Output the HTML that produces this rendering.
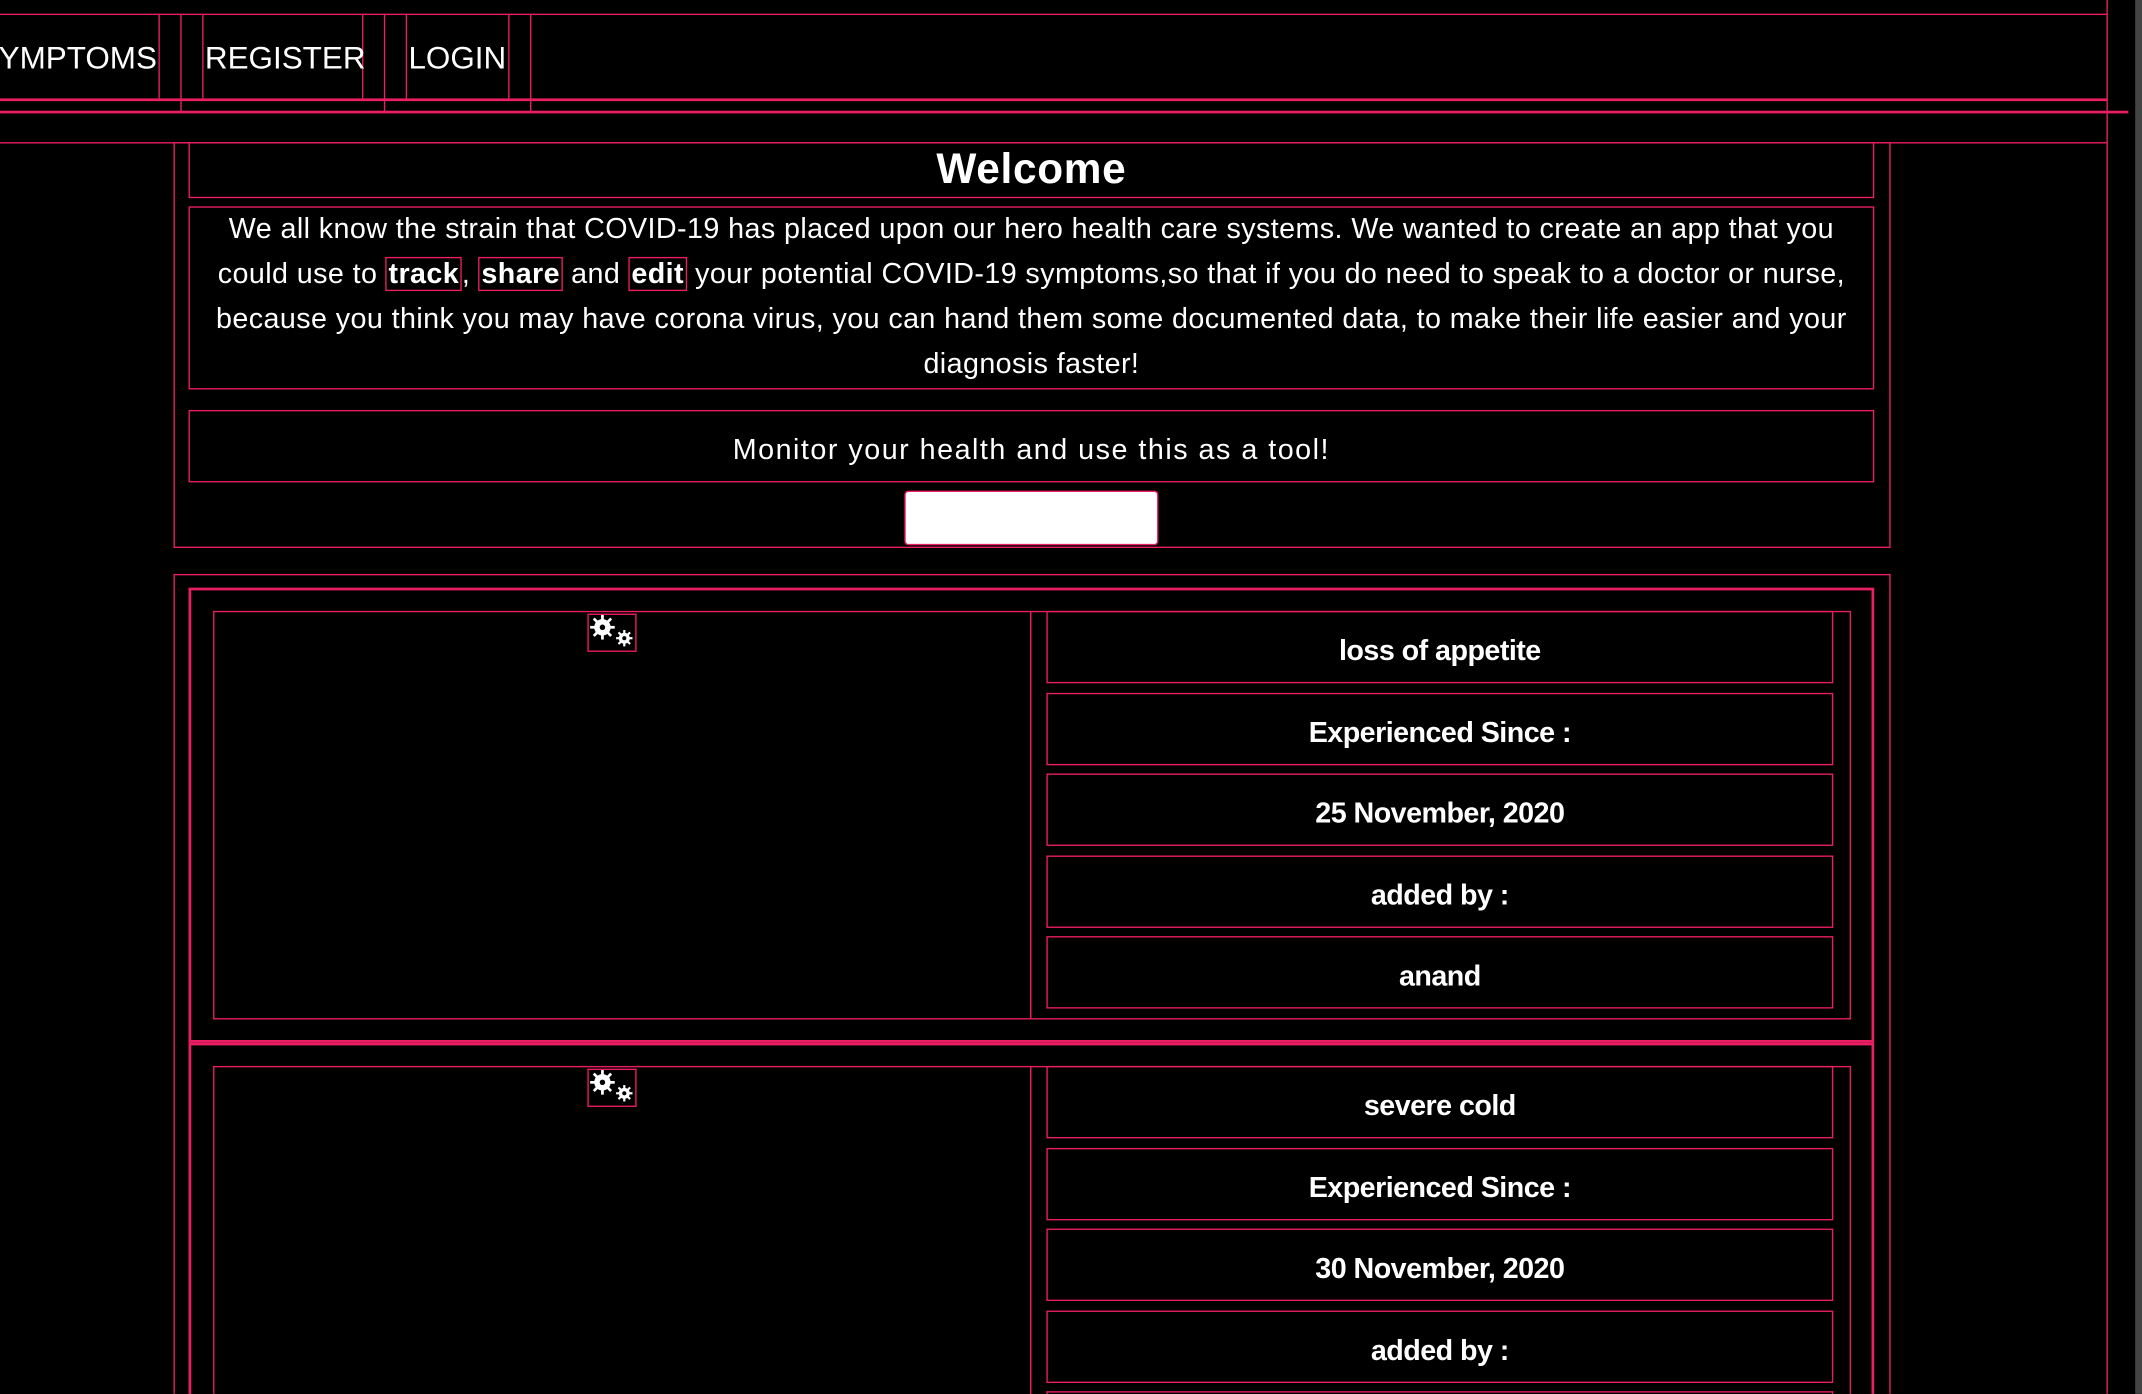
<!DOCTYPE html>
<html><head><meta charset="utf-8"><style>
html,body{margin:0;padding:0;background:#000;width:2142px;height:1394px;overflow:hidden}
#w{position:absolute;left:0;top:0;width:1568px;height:1020px;overflow:hidden;transform:scale(1.36607,1.3666);transform-origin:0 0;font-family:"Liberation Sans",sans-serif;color:#fff}
.b{position:absolute;border:1px solid #e91e63;box-sizing:border-box}
.h{position:absolute;height:0;border-top:1px solid #e91e63}
.v{position:absolute;width:0;border-left:1px solid #e91e63}
.t{position:absolute;white-space:nowrap}
.nav{font-size:23px;top:29px;letter-spacing:0px}
.row{display:flex;align-items:center;justify-content:center;font-weight:bold;font-size:21px;letter-spacing:-0.4px;padding-top:6px}
.p{position:absolute;left:139px;width:1232px;text-align:center;font-size:21px;letter-spacing:0.3px;white-space:nowrap}
.k{border:1px solid #e91e63;font-weight:bold;padding:0 1px}
</style></head><body><div id="w">
<div class="h" style="left:0;top:10px;width:1542px"></div>
<div class="v" style="left:1542px;top:0;height:1020px"></div>
<div class="h" style="left:0;top:72px;width:1542px;border-top-width:2px"></div>
<div class="h" style="left:0;top:81px;width:1558px;border-top-width:2px"></div>
<div class="v" style="left:116px;top:10px;height:62px"></div>
<div class="v" style="left:132px;top:10px;height:72px"></div>
<div class="v" style="left:148px;top:10px;height:62px"></div>
<div class="v" style="left:265px;top:10px;height:62px"></div>
<div class="v" style="left:281px;top:10px;height:72px"></div>
<div class="v" style="left:297px;top:10px;height:62px"></div>
<div class="v" style="left:372px;top:10px;height:62px"></div>
<div class="v" style="left:388px;top:10px;height:72px"></div>
<div class="t nav" style="left:-1px">YMPTOMS</div>
<div class="t nav" style="left:150px">REGISTER</div>
<div class="t nav" style="left:299px">LOGIN</div>
<div class="h" style="left:0;top:104px;width:1542px"></div>
<div class="b" style="left:127px;top:104px;width:1257px;height:297px"></div>
<div class="b" style="left:138px;top:104px;width:1234px;height:41px"></div>
<div class="t" style="left:138px;width:1234px;top:106px;text-align:center;font-size:31px;font-weight:bold;letter-spacing:0.5px">Welcome</div>
<div class="b" style="left:138px;top:151px;width:1234px;height:134px"></div>
<div class="p" style="top:156px">We all know the strain that COVID-19 has placed upon our hero health care systems. We wanted to create an app that you</div>
<div class="p" style="top:189px">could use to <span class="k">track</span>, <span class="k">share</span> and <span class="k">edit</span> your potential COVID-19 symptoms,so that if you do need to speak to a doctor or nurse,</div>
<div class="p" style="top:222px">because you think you may have corona virus, you can hand them some documented data, to make their life easier and your</div>
<div class="p" style="top:255px">diagnosis faster!</div>
<div class="b" style="left:138px;top:300px;width:1234px;height:53px"></div>
<div class="p" style="top:318px;letter-spacing:1.1px">Monitor your health and use this as a tool!</div>
<div style="position:absolute;left:662px;top:359px;width:186px;height:40px;background:#fff;border:1px solid #e91e63;box-sizing:border-box;border-radius:3px"></div>
<div class="h" style="left:127px;top:420px;width:1257px"></div>
<div class="v" style="left:127px;top:420px;height:600px"></div>
<div class="v" style="left:1383px;top:420px;height:600px"></div>
<div class="b" style="left:138px;top:430px;width:1234px;height:333px;border-width:2px"></div>
<div class="b" style="left:138px;top:763px;width:1234px;height:300px;border-width:2px"></div>

<div class="b" style="left:156px;top:447px;width:599px;height:299px"></div>
<div class="b" style="left:754px;top:447px;width:601px;height:299px"></div>
<div class="b" style="left:430px;top:449px;width:36px;height:28px"></div>
<svg style="position:absolute;left:431px;top:450px" width="34" height="26" viewBox="0 0 34 26"><g fill="#fff"><g transform="translate(10,9)"><circle r="6"/><rect x="-1" y="-9" width="2" height="18"/><rect x="-1" y="-9" width="2" height="18" transform="rotate(45)"/><rect x="-1" y="-9" width="2" height="18" transform="rotate(90)"/><rect x="-1" y="-9" width="2" height="18" transform="rotate(135)"/><circle r="2" fill="#000"/></g><g transform="translate(26,17)"><circle r="4"/><rect x="-0.8" y="-6" width="1.6" height="12"/><rect x="-0.8" y="-6" width="1.6" height="12" transform="rotate(45)"/><rect x="-0.8" y="-6" width="1.6" height="12" transform="rotate(90)"/><rect x="-0.8" y="-6" width="1.6" height="12" transform="rotate(135)"/><circle r="1.5" fill="#000"/></g></g></svg>
<div class="b row" style="left:766px;top:447px;width:576px;height:53px">loss of appetite</div>
<div class="b row" style="left:766px;top:507px;width:576px;height:53px">Experienced Since :</div>
<div class="b row" style="left:766px;top:566px;width:576px;height:53px">25 November, 2020</div>
<div class="b row" style="left:766px;top:626px;width:576px;height:53px">added by :</div>
<div class="b row" style="left:766px;top:685px;width:576px;height:53px">anand</div>

<div class="b" style="left:156px;top:780px;width:599px;height:240px;border-bottom:none"></div>
<div class="b" style="left:754px;top:780px;width:601px;height:240px;border-bottom:none"></div>
<div class="b" style="left:430px;top:782px;width:36px;height:28px"></div>
<svg style="position:absolute;left:431px;top:783px" width="34" height="26" viewBox="0 0 34 26"><g fill="#fff"><g transform="translate(10,9)"><circle r="6"/><rect x="-1" y="-9" width="2" height="18"/><rect x="-1" y="-9" width="2" height="18" transform="rotate(45)"/><rect x="-1" y="-9" width="2" height="18" transform="rotate(90)"/><rect x="-1" y="-9" width="2" height="18" transform="rotate(135)"/><circle r="2" fill="#000"/></g><g transform="translate(26,17)"><circle r="4"/><rect x="-0.8" y="-6" width="1.6" height="12"/><rect x="-0.8" y="-6" width="1.6" height="12" transform="rotate(45)"/><rect x="-0.8" y="-6" width="1.6" height="12" transform="rotate(90)"/><rect x="-0.8" y="-6" width="1.6" height="12" transform="rotate(135)"/><circle r="1.5" fill="#000"/></g></g></svg>
<div class="b row" style="left:766px;top:780px;width:576px;height:53px">severe cold</div>
<div class="b row" style="left:766px;top:840px;width:576px;height:53px">Experienced Since :</div>
<div class="b row" style="left:766px;top:899px;width:576px;height:53px">30 November, 2020</div>
<div class="b row" style="left:766px;top:959px;width:576px;height:53px">added by :</div>
<div class="b" style="left:766px;top:1018px;width:576px;height:2px;border-bottom:none"></div>
<div style="position:absolute;left:1563px;top:0;width:5px;height:1020px;background:#444"></div>
</div></body></html>
